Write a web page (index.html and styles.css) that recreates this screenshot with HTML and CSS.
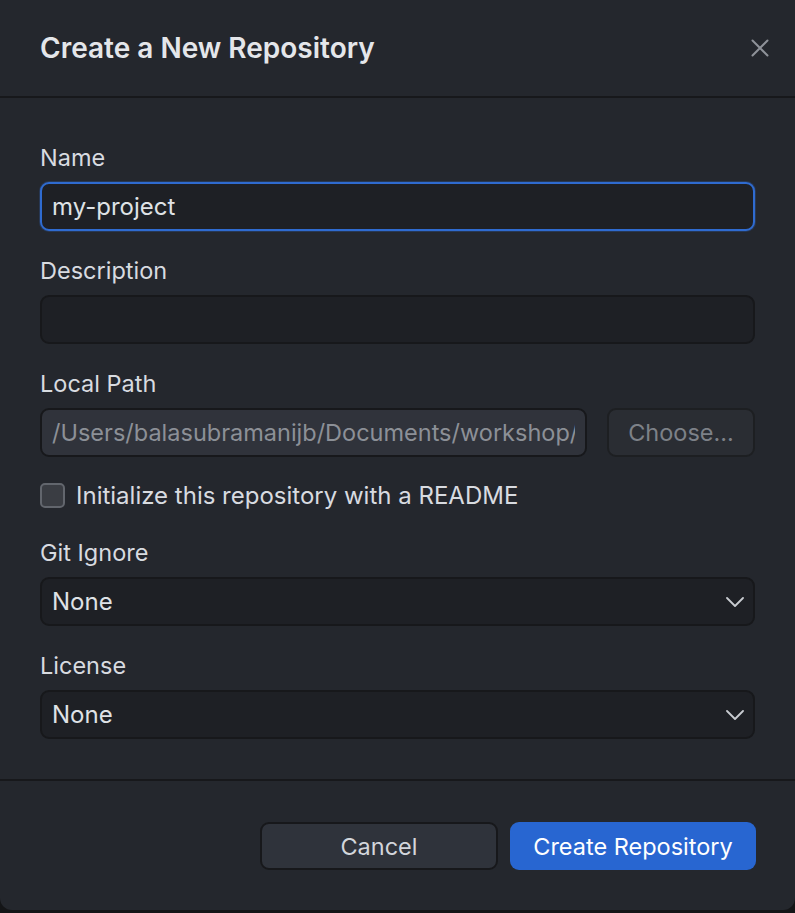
FILE: index.html
```html
<!DOCTYPE html>
<html>
<head>
<meta charset="utf-8">
<link rel="stylesheet" href="styles.css">
</head>
<body>
<div class="dialog">
  <header class="head">
    <h1 class="title">Create a New Repository</h1>
    <button class="close" aria-label="Close">
      <svg width="18" height="18" viewBox="0 0 18 18"><path d="M1.5 1.5 L16.5 16.5 M16.5 1.5 L1.5 16.5" stroke="#8e9299" stroke-width="2" stroke-linecap="round"/></svg>
    </button>
  </header>
  <main class="body">
    <div class="field">
      <label class="label">Name</label>
      <div class="input focused">my-project</div>
    </div>
    <div class="field">
      <label class="label">Description</label>
      <div class="input"></div>
    </div>
    <div class="field">
      <label class="label">Local Path</label>
      <div class="path-row">
        <div class="input path"><span>/Users/balasubramanijb/Documents/workshop/</span></div>
        <div class="choose">Choose...</div>
      </div>
    </div>
    <div class="check-row">
      <span class="checkbox"></span>
      <span class="check-label">Initialize this repository with a README</span>
    </div>
    <div class="field">
      <label class="label">Git Ignore</label>
      <div class="input select"><span>None</span>
        <svg width="18" height="10" viewBox="0 0 18 10"><path d="M1 1 L9 9 L17 1" fill="none" stroke="#c9ccd1" stroke-width="1.8" stroke-linecap="round" stroke-linejoin="round"/></svg>
      </div>
    </div>
    <div class="field">
      <label class="label">License</label>
      <div class="input select"><span>None</span>
        <svg width="18" height="10" viewBox="0 0 18 10"><path d="M1 1 L9 9 L17 1" fill="none" stroke="#c9ccd1" stroke-width="1.8" stroke-linecap="round" stroke-linejoin="round"/></svg>
      </div>
    </div>
  </main>
  <footer class="foot">
    <button class="btn cancel">Cancel</button>
    <button class="btn primary">Create Repository</button>
  </footer>
</div>
</body>
</html>
```

FILE: styles.css
```css
html, body {
  margin: 0;
  padding: 0;
  background: #141517;
}
body {
  font-family: Inter, "Noto Sans", "Liberation Sans", sans-serif;
  color: #d8dbe0;
}
.dialog {
  width: 795px;
  height: 910px;
  background: #24272d;
  border-radius: 0 0 12px 12px;
  display: flex;
  flex-direction: column;
  overflow: hidden;
}
.head {
  height: 98px;
  box-sizing: border-box;
  display: flex;
  align-items: center;
  justify-content: space-between;
  padding: 0 26px 0 40px;
  border-bottom: 2px solid #17181b;
}
.title {
  margin: 0;
  font-size: 28px;
  font-weight: 600;
  color: #e4e6ea;
  letter-spacing: 0;
}
.close {
  background: none;
  border: none;
  padding: 0;
  width: 18px;
  height: 18px;
  display: flex;
}
.body {
  padding: 48px 40px 40px;
  display: flex;
  flex-direction: column;
  gap: 28px;
  border-bottom: 2px solid #17181b;
}
.field {
  display: flex;
  flex-direction: column;
  gap: 12px;
}
.label {
  font-size: 23.5px;
  line-height: 24px;
  color: #d8dbe0;
}
.input {
  height: 49px;
  box-sizing: border-box;
  background: #1e2025;
  border: 2px solid #17181b;
  border-radius: 9px;
  padding: 0 10px;
  display: flex;
  align-items: center;
  font-size: 24px;
  color: #dfe2e6;
}
.input.focused {
  border-color: #2f6bd0;
  box-shadow: 0 0 0 1px rgba(47, 107, 208, 0.25);
}
.path-row {
  display: flex;
  gap: 20px;
}
.input.path {
  width: 547px;
  background: #30333b;
  color: #8c9097;
  overflow: hidden;
  white-space: nowrap;
  font-size: 23.5px;
}
.input.path span {
  display: block;
  overflow: hidden;
  width: 523px;
}
.choose {
  width: 148px;
  height: 49px;
  box-sizing: border-box;
  background: #2a2d33;
  border: 2px solid #1d1f22;
  border-radius: 9px;
  display: flex;
  align-items: center;
  justify-content: center;
  font-size: 23.5px;
  color: #7d8188;
}
.check-row {
  display: flex;
  align-items: center;
  gap: 11px;
  height: 25px;
  margin-top: -2px;
  margin-bottom: 5px;
}
.checkbox {
  width: 25px;
  height: 25px;
  box-sizing: border-box;
  border: 2px solid #62666d;
  border-radius: 5px;
  background: #3a3d43;
}
.check-label {
  font-size: 24px;
  color: #d8dbe0;
}
.select {
  justify-content: space-between;
  padding-right: 9px;
}
.foot {
  flex: 1;
  display: flex;
  justify-content: flex-end;
  align-items: flex-start;
  gap: 12px;
  padding: 41px 39px 0 40px;
}
.btn {
  height: 48px;
  box-sizing: border-box;
  border-radius: 9px;
  font-family: inherit;
  font-size: 23.5px;
  display: flex;
  align-items: center;
  justify-content: center;
}
.cancel {
  width: 238px;
  background: #2f333b;
  border: 2px solid #17181b;
  color: #d3d6db;
}
.primary {
  width: 246px;
  background: #2866d1;
  border: none;
  color: #ffffff;
}
```
